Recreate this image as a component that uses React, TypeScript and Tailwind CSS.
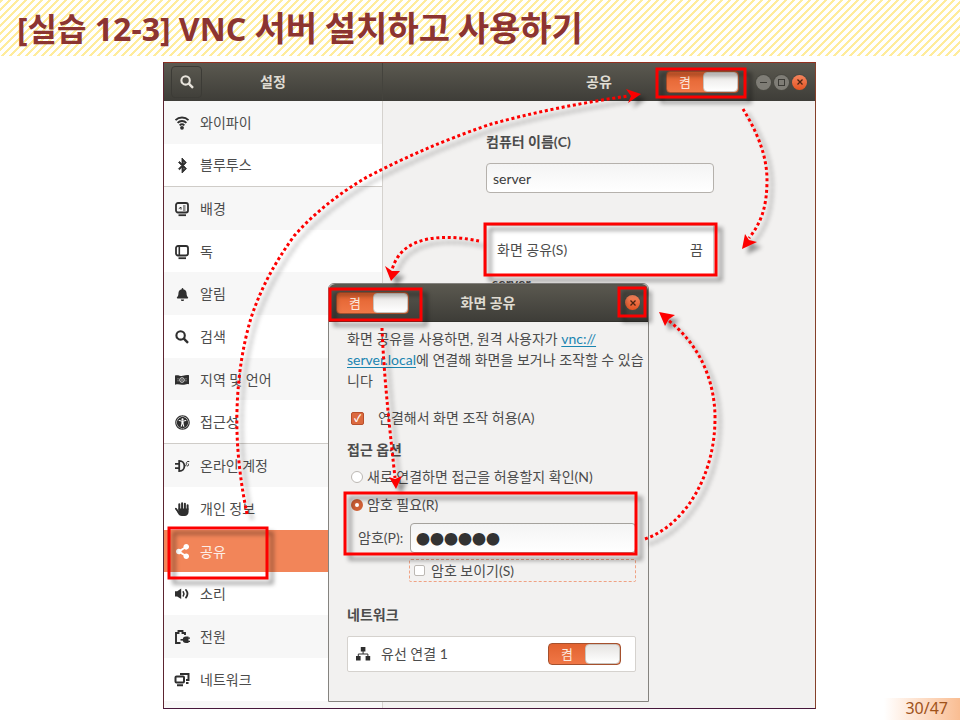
import type { ReactNode } from 'react';
import { FaBell, FaBluetoothB, FaShareAlt, FaUniversalAccess } from 'react-icons/fa';

function WifiIcon() {
  return (
    <svg viewBox="0 0 16 16" className="size-4" fill="none" stroke="currentColor" strokeWidth="1.8">
      <path d="M1.5 5.2C5 1.6 11 1.6 14.5 5.2" />
      <path d="M3.6 7.8C6 5.4 10 5.4 12.4 7.8" />
      <path d="M5.6 10.3C7 9 9 9 10.4 10.3" />
      <circle cx="8" cy="12.8" r="1.9" fill="currentColor" stroke="none" />
    </svg>
  );
}

function SearchIcon() {
  return (
    <svg viewBox="0 0 16 16" className="size-4" fill="none" stroke="currentColor" strokeWidth="2.1">
      <circle cx="6.6" cy="6.4" r="4.2" />
      <path d="M9.6 9.4l4.4 4.4" strokeWidth="2.4" />
    </svg>
  );
}

function BackgroundIcon() {
  return (
    <svg viewBox="0 0 16 16" className="size-4" fill="none" stroke="currentColor" strokeWidth="1.8">
      <rect x="2" y="2" width="12" height="9.5" rx="2" />
      <path d="M4.5 14.2h7.5" strokeWidth="1.8" />
      <path d="M4.8 7.6l2.2-1.4v2.4M9 5h2.500M9 7h2.500M9 9h2.500" strokeWidth="1" />
    </svg>
  );
}

function DockIcon() {
  return (
    <svg viewBox="0 0 16 16" className="size-4" fill="none" stroke="currentColor" strokeWidth="1.8">
      <rect x="2" y="2" width="12" height="9.5" rx="2" />
      <path d="M5.3 2v9.5" strokeWidth="1.6" />
      <path d="M4.5 14.2h7.5" />
    </svg>
  );
}

function RegionIcon() {
  return (
    <svg viewBox="0 0 16 16" className="size-4">
      <path d="M1 3.6c3-1.4 5 .8 8 .2 2-.5 4-1.2 6-.6v9c-3-.8-4 .9-7 .6-2.5-.3-4-1-7 0z" fill="currentColor" />
      <circle cx="8" cy="8" r="2.3" fill="none" stroke="#ddd" strokeWidth="1" />
      <circle cx="8" cy="8" r="0.8" fill="#ddd" />
      <path d="M4 6.2v3.6M12 6.2v3.6" stroke="#aaa" strokeWidth="0.9" strokeDasharray="1.2 0.8" />
    </svg>
  );
}

function AccountsIcon() {
  return (
    <svg viewBox="0 0 16 16" className="size-4" fill="none" stroke="currentColor">
      <path d="M5.2 2.8v10.4c3.3 0 5.2-2.3 5.2-5.2s-1.9-5.2-5.2-5.2z" strokeWidth="1.8" />
      <path d="M1 5.9h4M1 10.1h4" strokeWidth="1.8" />
      <path d="M10.5 8c2 0 1.8-1.5 1.8-2.5 0-1.5.8-2.3 3-2M12.8 8c2 0 2.2-1 1.2-2.5" strokeWidth="1" />
    </svg>
  );
}

function HandIcon() {
  return (
    <svg viewBox="0 0 16 16" className="size-4" fill="none" stroke="currentColor" strokeLinecap="round">
      <path d="M5.3 8V3.300M8.100 8V2.200M10.900 8V2.700M13.600 8V4.300" strokeWidth="2" />
      <path d="M1.8 7.3c1.2.4 1.6 1.7 2.5 3V7.500h10.300v3.200c0 2.600-1.600 4.300-4 4.300H8c-2.300 0-3.300-1.200-4.300-3z" fill="currentColor" stroke="none" />
      <path d="M1.9 7.8l2.3 3" strokeWidth="1.8" />
    </svg>
  );
}

function SpeakerIcon() {
  return (
    <svg viewBox="0 0 16 16" className="size-4" fill="none" stroke="currentColor" strokeLinecap="round">
      <path d="M1 5.2h2.2L7.200 2.500v10.600L3.200 10.400H1z" fill="currentColor" stroke="none" />
      <path d="M9.2 5.8c.9 1.300.9 2.900 0 4.200" strokeWidth="1.5" />
      <path d="M12 4c1.800 2.300 1.800 5.300 0 7.600" strokeWidth="1.8" />
    </svg>
  );
}

function PowerIcon() {
  return (
    <svg viewBox="0 0 16 16" className="size-4" fill="none" stroke="currentColor" strokeWidth="1.9">
      <path d="M6.5 14H2V4h2.500V2h4v2H11v2" />
      <path d="M14.5 7.5v6.500h-2.500a3.200 3.200 0 0 1 0-6.500z" fill="currentColor" stroke="none" />
      <path d="M6.5 10.8h4" strokeWidth="1.6" />
      <path d="M14 9.2h2M14 12.400h2" strokeWidth="1.2" />
    </svg>
  );
}

function NetworkIcon() {
  return (
    <svg viewBox="0 0 16 16" className="size-4" fill="none" stroke="currentColor" strokeWidth="2">
      <path d="M7 3V2h7.500v6H12" />
      <rect x="1.5" y="4.5" width="8.5" height="6" rx="1" />
      <path d="M3 13.2h6M12 11h2.500" />
    </svg>
  );
}

function WiredIcon() {
  return (
    <svg viewBox="0 0 16 16" className="size-4" fill="currentColor">
      <path d="M5.8 1h4.600v4.500H5.800zM1 10h4.600v4.500H1zM10.600 10h4.600v4.500h-4.600z" />
      <path d="M8.1 5v3M3.300 10.500V8h9.600v2.500" fill="none" stroke="currentColor" />
    </svg>
  );
}

const groups: { height: string; items: { name: string; icon: ReactNode }[] }[] = [
  {
    height: 'h-[86px] border-b',
    items: [
      { name: '와이파이', icon: <WifiIcon /> },
      { name: '블루투스', icon: <FaBluetoothB size={15} stroke="currentColor" strokeWidth="30" /> },
    ],
  },
  {
    height: 'h-[257px] border-b',
    items: [
      { name: '배경', icon: <BackgroundIcon /> },
      { name: '독', icon: <DockIcon /> },
      { name: '알림', icon: <FaBell size={13} /> },
      { name: '검색', icon: <SearchIcon /> },
      { name: '지역 및 언어', icon: <RegionIcon /> },
      { name: '접근성', icon: <FaUniversalAccess size={15} /> },
    ],
  },
  {
    height: 'h-[257px]',
    items: [
      { name: '온라인 계정', icon: <AccountsIcon /> },
      { name: '개인 정보', icon: <HandIcon /> },
      { name: '공유', icon: <FaShareAlt size={15} /> },
      { name: '소리', icon: <SpeakerIcon /> },
      { name: '전원', icon: <PowerIcon /> },
      { name: '네트워크', icon: <NetworkIcon /> },
    ],
  },
];

function Toggle({ label }: { label: string }) {
  return (
    <button
      type="button"
      role="switch"
      aria-checked="true"
      aria-label={label}
      className="flex h-[22px] w-[73px] items-stretch rounded border border-[#a5502d] bg-linear-to-b from-[#e2622f] to-[#f07746]"
    >
      <span className="flex-1 text-center text-[13px] leading-5 text-[#fbe9df]">켬</span>
      <span className="w-[35px] rounded border border-[#c9c4be] bg-linear-to-b from-[#e6e4e2] to-white" />
    </button>
  );
}

function CloseButton({ label }: { label: string }) {
  return (
    <button
      type="button"
      aria-label={label}
      className="flex size-[15px] items-center justify-center rounded-full bg-linear-to-b from-[#f4845c] to-[#e4531f] ring-1 ring-[#4a4942]"
    >
      <svg viewBox="0 0 8 8" className="size-2" stroke="#4c2412" strokeWidth="1.3">
        <path d="M1.5 1.5l5 5M6.5 1.5l-5 5" />
      </svg>
    </button>
  );
}

const bar = 'grid grid-cols-[1fr_auto_1fr] items-center bg-linear-to-b from-[#5b5950] to-[#3e3d38]';
const barTitle = 'text-sm font-bold text-[#dfdbd2]';
const windowButton =
  'flex size-[15px] items-center justify-center rounded-full bg-[#7f7d76] ring-1 ring-[#4a4942]';

function rowTone(name: string, index: number) {
  if (name === '공유') return 'bg-[#f28559] text-[#fdeee6]';
  return index % 2 === 0 ? 'bg-[#f7f7f7] text-[#4c4c4c]' : 'bg-white text-[#4c4c4c]';
}

function Sidebar() {
  return (
    <nav aria-label="설정" className="w-[219px] shrink-0 border-r border-[#d5d2ce] bg-[#f7f7f7]">
      {groups.map((group) => (
        <ul key={group.items[0].name} className={`flex flex-col border-[#cfccc8] ${group.height}`}>
          {group.items.map((item, i) => (
            <li key={item.name} className="flex flex-1">
              <a
                href="#"
                className={`flex flex-1 items-center gap-[10px] pt-px pl-[10px] text-sm ${rowTone(item.name, i)}`}
              >
                <span
                  className={`flex w-4 justify-center ${item.name === '공유' ? 'text-white' : 'text-[#2f2f2f]'}`}
                >
                  {item.icon}
                </span>
                {item.name}
              </a>
            </li>
          ))}
        </ul>
      ))}
    </nav>
  );
}

function SharingPanel() {
  return (
    <section className="flex-1 bg-[#f2f1f0] pt-[30px] pr-[101px] pl-[103px] text-sm text-[#4c4c4c]">
      <label htmlFor="host" className="block leading-[22px] font-bold">
        컴퓨터 이름(C)
      </label>
      <input
        id="host"
        defaultValue="server"
        className="mt-[10px] block h-[30px] w-full rounded border border-[#b5b1ac] bg-linear-to-b from-[#f4f4f4] to-white px-[6px] text-[#3c3c3c]"
      />
      <button
        type="button"
        className="mt-8 flex h-[50px] w-full items-center justify-between border border-[#d5d2ce] bg-white px-[10px]"
      >
        <span>화면 공유(S)</span>
        <span>끔</span>
      </button>
      <p className="pl-[6px] leading-4 font-bold">server</p>
    </section>
  );
}

function ScreenSharingDialog() {
  return (
    <div
      role="dialog"
      aria-label="화면 공유"
      className="absolute top-[220px] left-[164px] flex h-[419px] w-[321px] flex-col rounded-t-md border border-[#85837f] bg-[#f2f1f0] text-sm text-[#4c4c4c]"
    >
      <div className={`${bar} h-[38px] rounded-t-md border-b border-[#33322d] pr-2 pl-[7px]`}>
        <Toggle label="화면 공유 켬" />
        <h3 className={barTitle}>화면 공유</h3>
        <div className="flex justify-end">
          <CloseButton label="닫기" />
        </div>
      </div>
      <div className="flex flex-col pt-[6px] pr-[12px] pl-[18px]">
        <p className="leading-[21px] whitespace-nowrap">
          화면 공유를 사용하면, 원격 사용자가{' '}
          <a href="#" className="text-[#1b85b0] underline underline-offset-2">
            vnc://
            <br />
            server.local
          </a>
          에 연결해 화면을 보거나 조작할 수 있습
          <br />
          니다
        </p>
        <label className="mt-4 flex h-[22px] items-center gap-[14px] pl-1">
          <input
            type="checkbox"
            defaultChecked
            className="grid size-[13px] appearance-none place-items-center rounded-xs border border-[#b8502c] bg-[#dc6a3f] text-white before:text-[10px] before:leading-none before:font-bold before:content-['✓']"
          />
          연결해서 화면 조작 허용(A)
        </label>
        <h4 className="mt-[10px] leading-[22px] font-bold">접근 옵션</h4>
        <label className="mt-[5px] flex h-[22px] items-center gap-1 pl-1">
          <input
            type="radio"
            name="access"
            className="size-3 appearance-none rounded-full border border-[#bcb8b3] bg-white"
          />
          새로 연결하면 접근을 허용할지 확인(N)
        </label>
        <label className="mt-[6px] flex h-[22px] items-center gap-1 pl-1">
          <input
            type="radio"
            name="access"
            defaultChecked
            className="size-3 appearance-none rounded-full border-4 border-[#cf5f35] bg-white"
          />
          암호 필요(R)
        </label>
        <div className="mt-[7px] flex items-center pl-[11px]">
          <label htmlFor="password" className="w-[52px] shrink-0">
            암호(P):
          </label>
          <input
            id="password"
            defaultValue="●●●●●●"
            className="h-[30px] w-0 flex-1 rounded border border-[#a5a29d] bg-linear-to-b from-[#f4f4f4] to-white px-[5px] font-['Noto_Sans_CJK_KR',sans-serif] text-[#333]"
          />
        </div>
        <label className="mt-[6px] ml-[62px] flex h-[23px] items-center gap-[6px] rounded-xs border border-dashed border-[#f0a283] pl-1">
          <input
            type="checkbox"
            className="size-[11px] appearance-none rounded-xs border border-[#bcb8b3] bg-white"
          />
          암호 보이기(S)
        </label>
        <h4 className="mt-[22px] leading-[22px] font-bold">네트워크</h4>
        <div className="mt-[10px] flex h-[36px] items-center rounded-xs border border-[#d5d2ce] bg-white pr-[14px] pl-[7px] text-[#2f2f2f]">
          <WiredIcon />
          <span className="flex-1 pl-[10px] text-[#4c4c4c]">유선 연결 1</span>
          <Toggle label="유선 연결 1 켬" />
        </div>
      </div>
    </div>
  );
}

const boxes = [
  { x: 657, y: 69, w: 88, h: 28 },
  { x: 485, y: 224, w: 231, h: 51 },
  { x: 330, y: 289, w: 91, h: 31 },
  { x: 619, y: 288, w: 26, h: 28 },
  { x: 345, y: 493, w: 291, h: 61 },
  { x: 169, y: 528, w: 98, h: 50 },
];

const arrows = [
  {
    line: 'M247 514C240 480 236 445 237 410C238 375 243 345 251 318C261 288 274 264 294 236C315 212 340 193 367 177C410 155 440 142 488 125C530 113 580 103 628 96',
    head: '641,94 626,89 631,96 628,103',
  },
  {
    line: 'M743 109C754 127 767 152 767 180C767 205 762 222 749 238',
    head: '742,249 745,234 749,240 757,242',
  },
  { line: 'M479 241C450 235 402 232 392 270', head: '391,281 385,266 392,271 400,271' },
  { line: 'M382 328C384 380 391 440 395 478', head: '396,489 389,477 395,479 402,476' },
  {
    line: 'M645 539C685 525 716 475 715 415C714 380 700 345 668 320',
    head: '659,312 675,315 669,319 665,326',
  },
];

function Annotations() {
  return (
    <svg
      viewBox="163 62 653 647"
      width="653"
      height="647"
      aria-hidden="true"
      className="pointer-events-none absolute -top-px -left-px max-w-none [filter:drop-shadow(5px_5px_2px_rgb(0_0_0/0.4))]"
    >
      <g fill="none" stroke="#fd0000" strokeWidth="3">
        {boxes.map((b) => (
          <rect key={`${b.x}-${b.y}`} x={b.x} y={b.y} width={b.w} height={b.h} />
        ))}
        {arrows.map((a) => (
          <path key={a.line} d={a.line} strokeDasharray="3 2.7" />
        ))}
      </g>
      {arrows.map((a) => (
        <polygon key={a.head} points={a.head} fill="#fd0000" />
      ))}
    </svg>
  );
}

export default function App() {
  return (
    <div className="relative flex min-h-screen flex-col bg-white font-['Lato','Noto_Sans_CJK_KR',sans-serif]">
      <header className="flex h-[56px] items-center bg-[linear-gradient(135deg,#ffec9c_0%_20%,#fff_20%_50%,#ffec9c_50%_70%,#fff_70%)] bg-[length:8px_8px] pl-[17px]">
        <h1 className="font-['Noto_Sans','Noto_Sans_CJK_KR',sans-serif] text-[32px] leading-[60px] font-bold whitespace-nowrap text-[#8c3431]">
          [실습 12-3] VNC{' '}
          <span className="font-['Noto_Sans_CJK_KR',sans-serif] text-[34px]">서버 설치하고 사용하기</span>
        </h1>
      </header>
      <main className="flex justify-center pt-[6px] pl-[19px]">
        <div className="relative w-full max-w-[653px] border border-t-[#93301f] border-r-[#85402a] border-b-[#46163a] border-l-[#5c2430]">
          <div className="flex h-[38px]">
            <div className={`${bar} w-[219px] border-r border-[#44433d] px-[7px]`}>
              <button
                type="button"
                aria-label="검색"
                className="flex h-8 w-[31px] items-center justify-center rounded border border-[#3c3b36] text-[#e8e4dc]"
              >
                <SearchIcon />
              </button>
              <h2 className={barTitle}>설정</h2>
            </div>
            <div className={`${bar} flex-1 px-2`}>
              <h2 className={`${barTitle} col-start-2`}>공유</h2>
              <div className="flex items-center justify-end gap-[3px]">
                <span className="mr-[14px] flex">
                  <Toggle label="공유 켬" />
                </span>
                <button type="button" aria-label="최소화" className={windowButton}>
                  <span className="h-px w-[7px] bg-[#3c3b36]" />
                </button>
                <button type="button" aria-label="최대화" className={windowButton}>
                  <span className="size-[7px] border border-[#3c3b36]" />
                </button>
                <CloseButton label="창 닫기" />
              </div>
            </div>
          </div>
          <div className="flex h-[607px]">
            <Sidebar />
            <SharingPanel />
          </div>
          <ScreenSharingDialog />
          <Annotations />
        </div>
      </main>
      <footer className="absolute right-0 bottom-0 h-[22px] w-[76px] bg-linear-to-r from-white to-[#f9bd92] pr-3 text-right font-['Noto_Sans',sans-serif] text-base leading-[21px] text-[#a0521a]">
        30/47
      </footer>
    </div>
  );
}
